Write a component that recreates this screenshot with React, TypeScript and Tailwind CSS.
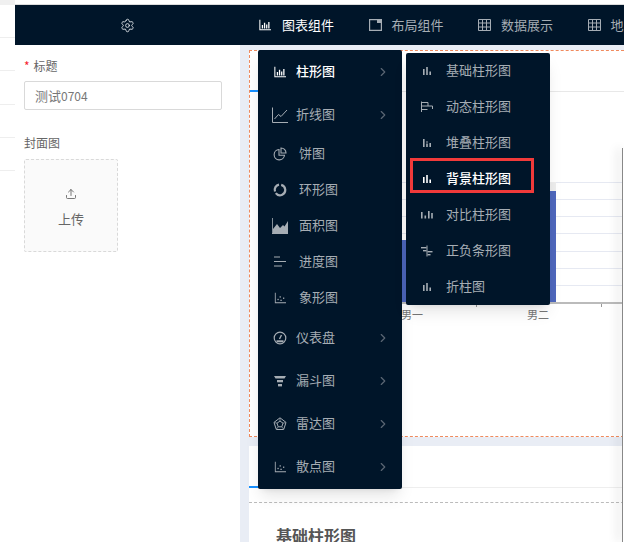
import { ReactNode } from 'react';
import { Settings, ChevronRight, Upload } from 'lucide-react';

const FONT = { fontFamily: '"Noto Sans CJK SC", "Liberation Sans", sans-serif' };

const BarsIcon = () => (
  <svg width="14" height="14" viewBox="0 0 14 14" fill="currentColor">
    <rect x="3" y="5" width="1.6" height="6" />
    <rect x="6.200" y="3" width="1.600" height="8" />
    <rect x="9.400" y="7.500" width="1.600" height="3.500" />
  </svg>
);

const StackIcon = () => (
  <svg width="14" height="14" viewBox="0 0 14 14" fill="currentColor">
    <rect x="3" y="3" width="1.600" height="8" />
    <rect x="6.200" y="5" width="1.600" height="2" opacity="0.6" />
    <rect x="6.200" y="7.500" width="1.600" height="3.500" />
    <rect x="9.400" y="7" width="1.600" height="4" />
  </svg>
);

const AxisBars = () => (
  <svg width="12" height="12" viewBox="0 0 14 14" fill="none" stroke="currentColor" strokeWidth="1.200">
    <path d="M1 1v11.500h13" />
    <path d="M4 11V7M6.500 11V4.500M9 11V6.500M11.500 11V3.500" strokeWidth="1.500" />
  </svg>
);

const LineIcon = () => (
  <svg width="16" height="16" viewBox="0 0 16 16" fill="none" stroke="currentColor">
    <path d="M.5 .5v15H16" />
    <path d="M2.500 12l4-4.500 2.500 2L15 3" />
  </svg>
);

const PieIcon = () => (
  <svg width="14" height="14" viewBox="0 0 14 14" fill="none" stroke="currentColor" strokeWidth="1.100">
    <path d="M6 2.500a5.200 5.200 0 1 0 5.500 5.800H6z" />
    <path d="M8 1a5 5 0 0 1 5 5H8z" />
  </svg>
);

const RingIcon = () => (
  <svg width="14" height="14" viewBox="0 0 14 14" fill="none" stroke="currentColor" strokeWidth="2.200">
    <path d="M8.200 1.900a5.200 5.200 0 0 1 1 9.800 5.200 5.200 0 0 1-6.400-1.600" />
    <path d="M2 8.500a5.200 5.200 0 0 1 4-6.800" />
  </svg>
);

const AreaIcon = () => (
  <svg width="16" height="16" viewBox="0 0 16 16" fill="currentColor">
    <path d="M0 0h.8v15H16v1H0z" />
    <path d="M1 15v-4l4-5 3 4 3-3 1.500 1.500L16 3v12z" />
  </svg>
);

const ProgressIcon = () => (
  <svg width="14" height="14" viewBox="0 0 14 14" fill="currentColor">
    <rect x="1" y="1.500" width="6" height="1" />
    <rect x="1" y="6" width="12" height="1" />
    <rect x="1" y="10.500" width="8" height="1" />
  </svg>
);

const ScatterIcon = () => (
  <svg width="12" height="12" viewBox="0 0 14 14" fill="currentColor">
    <path d="M1 1h1v11h12v1H1z" />
    <rect x="4" y="8" width="1.500" height="1.500" />
    <rect x="6.500" y="5" width="1.500" height="1.500" />
    <rect x="7.500" y="9" width="1.500" height="1.500" />
    <rect x="10.500" y="6.500" width="1.500" height="1.500" />
  </svg>
);

const GaugeIcon = () => (
  <svg width="14" height="14" viewBox="0 0 14 14" fill="none" stroke="currentColor" strokeWidth="1.200">
    <circle cx="7" cy="7" r="5.800" />
    <path d="M6.500 8l2-4" strokeWidth="1.400" />
    <path d="M3.500 10.300h7" strokeWidth="2" />
  </svg>
);

const FunnelIcon = () => (
  <svg width="14" height="14" viewBox="0 0 14 14" fill="currentColor">
    <path d="M1 2h12l-1.500 2.500h-9z" />
    <path d="M4 6h6v2.300H4z" />
    <path d="M5 10h4v2.400H5z" />
  </svg>
);

const RadarIcon = () => (
  <svg width="14" height="14" viewBox="0 0 14 14" fill="none" stroke="currentColor" strokeWidth="1">
    <path d="M7 .8l6 4.600-2.300 7.100H3.300L1 5.400z" />
    <path d="M7 4l3 2.200-1.200 3.600H5.200L4 6.200z" />
    <path d="M7 1v3M1.500 5.500L4 6.200M12.500 5.500L10 6.200M3.500 12l1.700-2.200M10.500 12L8.800 9.800" strokeWidth="0.700" />
  </svg>
);

const DynamicIcon = () => (
  <svg width="14" height="14" viewBox="0 0 14 14" fill="none" stroke="currentColor">
    <path d="M1.500 1.500v10.500" />
    <path d="M1.500 2.500h6.500v3.500M1.500 6h11v3M1.500 9.500h6" />
  </svg>
);

const CompareIcon = () => (
  <svg width="14" height="14" viewBox="0 0 14 14" fill="currentColor">
    <rect x="1" y="4" width="1.600" height="6.500" />
    <rect x="4.500" y="7.500" width="1.600" height="3" />
    <rect x="8" y="3" width="1.600" height="7.500" />
    <rect x="11.200" y="5" width="1.600" height="5.500" />
  </svg>
);

const MinusIcon = () => (
  <svg width="14" height="14" viewBox="0 0 14 14" fill="currentColor">
    <rect x="6.500" y="1.500" width="1" height="11" />
    <rect x="1" y="3" width="5.500" height="1.400" />
    <rect x="3" y="6" width="3.500" height="1.400" />
    <rect x="7.500" y="7" width="5" height="1.400" />
    <rect x="7.500" y="10" width="3" height="1.400" />
  </svg>
);

const LayoutIcon = () => (
  <svg width="13" height="12" viewBox="0 0 13 12" fill="currentColor">
    <path d="M0 0h13v12H0zM1.200 1.200v9.600h10.600V4H8V1.200z" fillRule="evenodd" />
  </svg>
);

const GridIcon = () => (
  <svg width="13" height="12" viewBox="0 0 13 12" fill="none" stroke="currentColor">
    <path d="M.5 .5h12v11H.5zM.5 4h12M.5 8h12M4.500 .5v11M8.500 .5v11" />
  </svg>
);

interface IMenuItem {
  icon: ReactNode;
  label: string;
  height: string;
  arrow?: boolean;
  active?: boolean;
}

const CHART_MENU: IMenuItem[] = [
  { icon: <AxisBars />, label: '柱形图', height: 'h-[43px]', arrow: true, active: true },
  { icon: <LineIcon />, label: '折线图', height: 'h-[43px]', arrow: true },
  { icon: <PieIcon />, label: '饼图', height: 'h-[36px]' },
  { icon: <RingIcon />, label: '环形图', height: 'h-[36px]' },
  { icon: <AreaIcon />, label: '面积图', height: 'h-[36px]' },
  { icon: <ProgressIcon />, label: '进度图', height: 'h-[36px]' },
  { icon: <ScatterIcon />, label: '象形图', height: 'h-[36px]' },
  { icon: <GaugeIcon />, label: '仪表盘', height: 'h-[43px]', arrow: true },
  { icon: <FunnelIcon />, label: '漏斗图', height: 'h-[43px]', arrow: true },
  { icon: <RadarIcon />, label: '雷达图', height: 'h-[43px]', arrow: true },
  { icon: <ScatterIcon />, label: '散点图', height: 'h-[44px]', arrow: true },
];

const BAR_MENU = [
  { icon: <BarsIcon />, label: '基础柱形图' },
  { icon: <DynamicIcon />, label: '动态柱形图' },
  { icon: <StackIcon />, label: '堆叠柱形图' },
  { icon: <BarsIcon />, label: '背景柱形图', active: true },
  { icon: <CompareIcon />, label: '对比柱形图' },
  { icon: <MinusIcon />, label: '正负条形图' },
  { icon: <BarsIcon />, label: '折柱图' },
];

const NAV = [
  { icon: <AxisBars />, label: '图表组件', active: true },
  { icon: <LayoutIcon />, label: '布局组件' },
  { icon: <GridIcon />, label: '数据展示' },
  { icon: <GridIcon />, label: '地图组件' },
];

const App = () => {
  return (
    <div className="relative w-[624px] h-[542px] overflow-hidden bg-white text-[13px]" style={FONT}>
      <div className="h-[5px] flex">
        <div className="w-[15px] bg-[#f0f0f0]" />
        <div className="flex-1 border-b border-[#dcdcdc]" />
      </div>
      <div className="flex h-[537px]">
        {/* stub of the list on the far left */}
        <div className="w-[15px] shrink-0 flex flex-col pt-[32px]">
          <div className="h-[33px] border-t border-[#eeeeee]" />
          <div className="h-[34px] border-t border-[#eeeeee]" />
          <div className="h-[33px] border-t border-[#eeeeee]" />
          <div className="h-[33px] border-t border-[#eeeeee]" />
          <div className="border-t border-[#eeeeee]" />
        </div>
        <div className="flex-1 min-w-0 flex flex-col">
          <header className="h-[40px] bg-[#001529] flex items-center shrink-0 overflow-hidden">
            <div className="w-[225px] shrink-0 flex justify-center text-[#d8dde2]">
              <Settings size={15} strokeWidth={1.5} />
            </div>
            <nav className="flex items-center pl-[19px] whitespace-nowrap">
              {NAV.map(({ icon, label, active }) => (
                <div
                  key={label}
                  className={`flex items-center w-[109.5px] shrink-0 ${active ? 'text-white' : 'text-[#a6adb4]'}`}
                >
                  <span className="w-[23px] shrink-0">{icon}</span>
                  <span>{label}</span>
                </div>
              ))}
            </nav>
          </header>
          <div className="flex-1 flex min-h-0">
            <aside className="w-[225px] shrink-0 pl-[9px] pr-[18px] pt-[12px]">
              <div className="text-[#666666] text-[12px] leading-[18px]">
                <span className="text-[#f5222d] mr-[4px]">*</span>标题
              </div>
              <div className="mt-[6px] h-[29px] border border-[#d9d9d9] rounded-[2px] pl-[10px] flex items-center text-[#777777] text-[13px]">
                测试<span className="text-[12px]">0704</span>
              </div>
              <div className="mt-[24px] text-[#666666] text-[12px] leading-[18px]">封面图</div>
              <div className="mt-[7px] w-[94px] h-[93px] border border-dashed border-[#d9d9d9] bg-[#fafafa] rounded-[2px] flex flex-col items-center justify-center gap-[11px] text-[#666666] text-[13px] pt-[3px]">
                <Upload size={12} strokeWidth={1.75} />
                <span className="leading-[16px]">上传</span>
              </div>
            </aside>
            <main className="flex-1 min-w-0 bg-[#e9edf5] pl-[9px] pt-[5px] flex flex-col">
              <section className="h-[387px] bg-white border border-dashed border-[#f08a5d] border-r-0 flex flex-col shrink-0">
                <div className="h-[41px] border-b border-[#e8e8e8] shrink-0 flex items-end">
                  <div className="w-[60px] h-[2px] bg-[#1890ff] -mb-px" />
                </div>
                <div className="flex-1 pt-[90px] pl-[10px] relative">
                  <div className="relative h-[122px] border-b-2 border-[#bbbbbb] flex flex-col">
                    {[0, 1, 2, 3, 4, 5, 6].map((n) => (
                      <div key={n} className="flex-1 border-t border-[#e6e9f2]" />
                    ))}
                    <div className="absolute left-[140px] bottom-0 w-[40px] h-[62px] bg-[#4e67bd]" />
                    <div className="absolute left-[262px] bottom-0 top-0 w-[34px] bg-[#eeeeee]" />
                    <div className="absolute left-[262px] bottom-0 w-[34px] h-[111px] bg-[#4e67bd]" />
                    <div className="absolute left-[216px] -bottom-[5px] w-px h-[3px] bg-[#999999]" />
                    <div className="absolute left-[341px] -bottom-[5px] w-px h-[3px] bg-[#999999]" />
                  </div>
                  <div className="flex pl-[141px] pt-[2px] text-[11px] text-[#777777]">
                    <span className="w-[126px]">男一</span>
                    <span>男二</span>
                  </div>
                </div>
              </section>
              <section className="mt-[9px] flex-1 bg-white flex flex-col">
                <div className="h-[42px] border-b border-[#eeeeee] shrink-0 flex items-end">
                  <div className="w-[60px] h-[2px] bg-[#1890ff] -mb-px" />
                </div>
                <div className="mt-[14px] border-t border-dashed border-[#bbbbbb] pt-[20px] pl-[27px] text-[16px] font-bold text-[#555555]">
                  基础柱形图
                </div>
              </section>
            </main>
          </div>
        </div>
      </div>

      {/* dropdown: chart types */}
      <div className="absolute left-[258px] top-[50px] w-[144px] h-[439px] bg-[#001529] rounded-[2px] shadow-lg text-[#a6adb4]">
        {CHART_MENU.map(({ icon, label, height, arrow, active }) => (
          <div key={label} className={`${height} relative flex items-center pl-[14px] ${active ? 'text-white font-medium' : ''}`}>
            <span className="w-[16px] flex justify-center">{icon}</span>
            <span className={`-mt-[2px] ${arrow ? 'ml-[8px]' : 'ml-[11px]'}`}>{label}</span>
            {arrow && <ChevronRight size={14} strokeWidth={2} className="absolute right-[12px] text-[#5a6673]" />}
          </div>
        ))}
      </div>

      {/* dropdown: bar charts */}
      <div className="absolute left-[406px] top-[53px] w-[144px] h-[252px] bg-[#001529] rounded-[2px] shadow-lg text-[#a6adb4]">
        {BAR_MENU.map(({ icon, label, active }) => (
          <div key={label} className={`h-[36px] flex items-center pl-[14px] gap-[12px] ${active ? 'text-white font-medium' : ''}`}>
            {icon}
            <span className="-mt-[2px]">{label}</span>
          </div>
        ))}
      </div>

      {/* annotation box */}
      <div className="absolute left-[410px] top-[158px] w-[124px] h-[35px] border-[3px] border-[#f13a3a]" />

      {/* edge of the next panel */}
      <div className="absolute right-0 top-[148px] bottom-0 w-[2px] border-l border-[#888888] bg-white shadow-[-4px_0_10px_rgba(0,0,0,0.22)]" />
    </div>
  );
};

export default App;
